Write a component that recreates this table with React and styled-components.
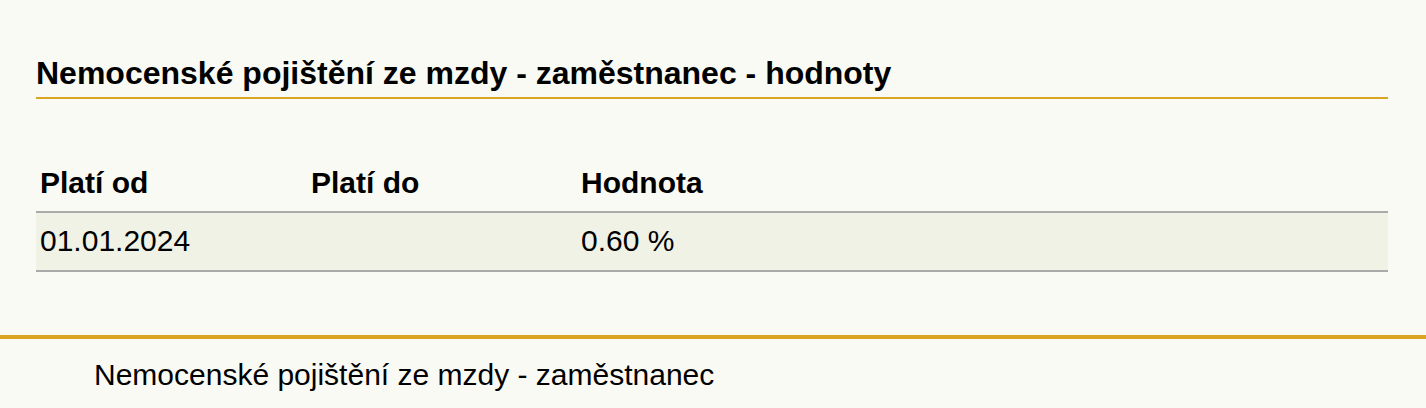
import React from "react";
import styled, { createGlobalStyle } from "styled-components";

const GlobalStyle = createGlobalStyle`
  body {
    margin: 0;
    background: #fafaf5;
    font-family: "Liberation Sans", Arial, sans-serif;
    color: #000;
  }
`;

const Section = styled.section`
  padding: 55px 38px 0 36px;
`;

const Title = styled.h2`
  margin: 0;
  padding-bottom: 5px;
  font-size: 32px;
  font-weight: bold;
  border-bottom: 2px solid #daa520;
`;

const Table = styled.table`
  width: 100%;
  margin-top: 55px;
  border-collapse: collapse;
  table-layout: fixed;
  font-size: 30px;
`;

const Th = styled.th`
  box-sizing: border-box;
  text-align: left;
  font-weight: bold;
  padding: 12px 4px 11px;
  border-bottom: 2px solid #aaaaaa;
  width: ${(p) => p.$w || "auto"};
`;

const Row = styled.tr`
  background: #f1f2e6;
  border-bottom: 2px solid #aaaaaa;
`;

const Td = styled.td`
  padding: 11px 4px 12px;
`;

const Footer = styled.footer`
  margin-top: 63px;
  border-top: 4px solid #daa520;
  padding: 19px 0 0 94px;
  font-size: 30px;
`;

const rows = [{ from: "01.01.2024", to: "", value: "0.60 %" }];

export default function App() {
  return (
    <>
      <GlobalStyle />
      <Section>
        <Title>Nemocenské pojištění ze mzdy - zaměstnanec - hodnoty</Title>
        <Table>
          <thead>
            <tr>
              <Th $w="271px">Platí od</Th>
              <Th $w="270px">Platí do</Th>
              <Th>Hodnota</Th>
            </tr>
          </thead>
          <tbody>
            {rows.map((r, i) => (
              <Row key={i}>
                <Td>{r.from}</Td>
                <Td>{r.to}</Td>
                <Td>{r.value}</Td>
              </Row>
            ))}
          </tbody>
        </Table>
      </Section>
      <Footer>Nemocenské pojištění ze mzdy - zaměstnanec</Footer>
    </>
  );
}
